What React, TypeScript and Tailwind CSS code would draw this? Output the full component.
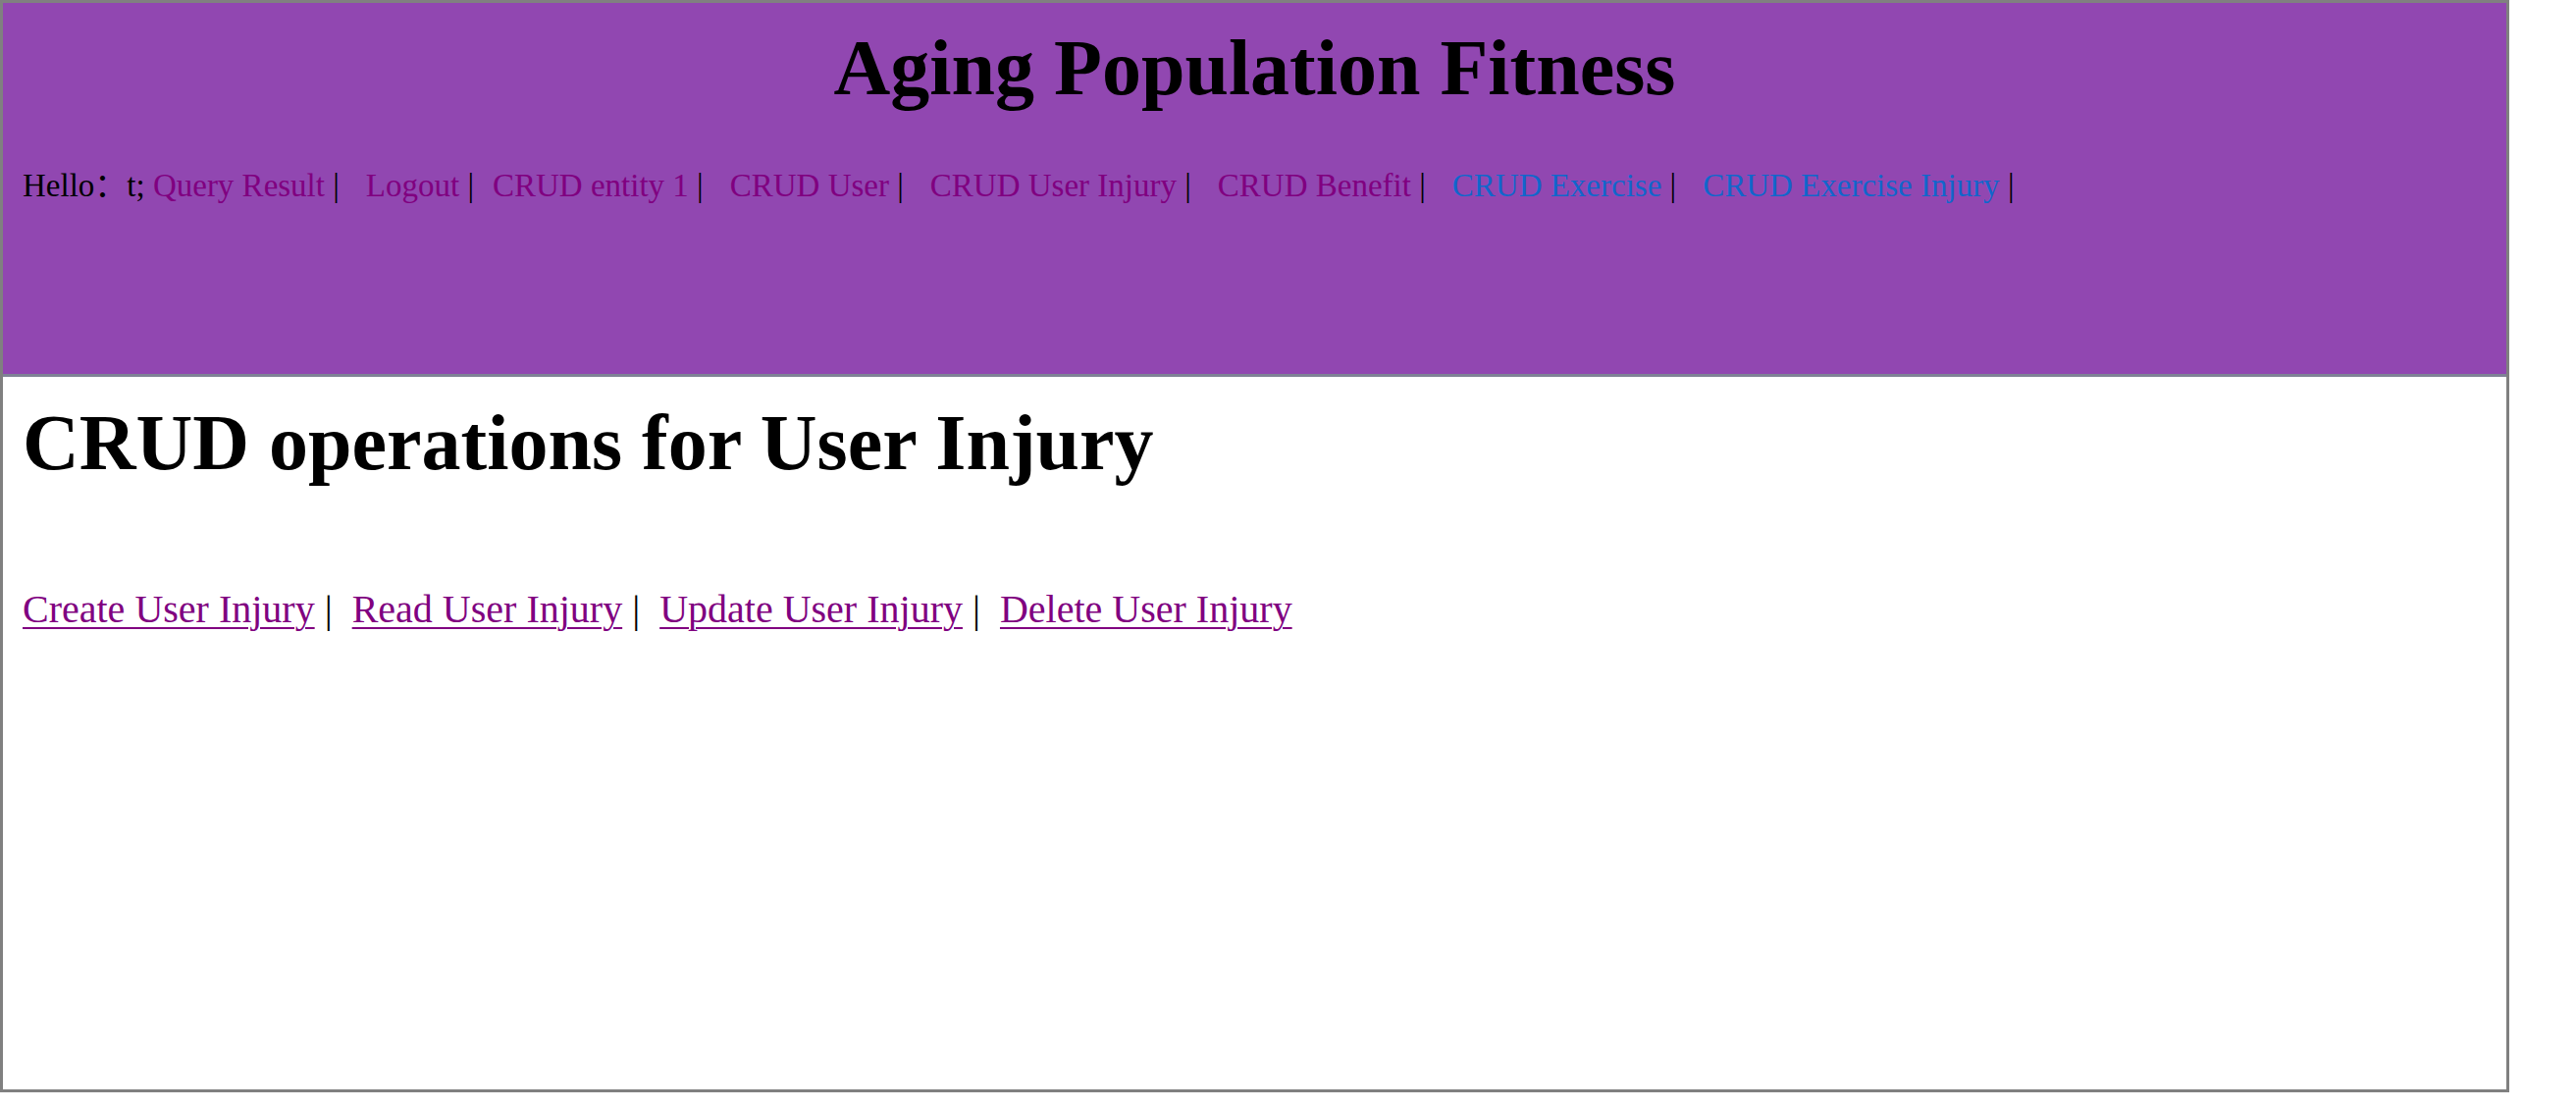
import React from 'react';

const serif = { fontFamily: '"Liberation Serif", "Noto Sans CJK SC", serif' };

function NavLink({ children, blue }: { children: React.ReactNode; blue?: boolean }) {
    return (
        <a href="#" className={blue ? 'text-[#1166cc] no-underline' : 'text-[#800080] no-underline'}>
            {children}
        </a>
    );
}

// " |" followed by a gap before the next link
function Sep({ wide }: { wide?: boolean }) {
    return (
        <>
            {' |'}
            <span className={wide ? 'inline-block w-[27px]' : 'inline-block w-[19px]'} />
        </>
    );
}

function CrudLink({ children }: { children: React.ReactNode }) {
    return (
        <a href="#" className="text-[#800080] underline decoration-[2px] underline-offset-[5px]">
            {children}
        </a>
    );
}

export default function App() {
    return (
        <div className="bg-white min-h-[1130px]" style={serif}>
            <div className="w-[2557px] h-[1113px] border-[3px] border-[#808080] flex flex-col">
                <header className="h-[381px] bg-[#9147b1] border-b-[3px] border-[#7f8296] shrink-0">
                    <h1 className="pt-[26px] text-[80px] leading-none font-bold text-black text-center">
                        Aging Population Fitness
                    </h1>
                    <div className="mt-[64px] pl-[20px] text-[33px] leading-none text-black whitespace-pre">
                        Hello：t; <NavLink>Query Result</NavLink><Sep wide />
                        <NavLink>Logout</NavLink><Sep />
                        <NavLink>CRUD entity 1</NavLink><Sep wide />
                        <NavLink>CRUD User</NavLink><Sep wide />
                        <NavLink>CRUD User Injury</NavLink><Sep wide />
                        <NavLink>CRUD Benefit</NavLink><Sep wide />
                        <NavLink blue>CRUD Exercise</NavLink><Sep wide />
                        <NavLink blue>CRUD Exercise Injury</NavLink> |
                    </div>
                </header>

                <main className="flex-1 pl-[20px]">
                    <h2 className="mt-[27px] text-[80px] leading-none font-bold text-black">
                        CRUD operations for User Injury
                    </h2>
                    <div className="mt-[110px] text-[40px] leading-none text-black whitespace-pre">
                        <CrudLink>Create User Injury</CrudLink> |{'\u00a0 '}
                        <CrudLink>Read User Injury</CrudLink> |{'\u00a0 '}
                        <CrudLink>Update User Injury</CrudLink> |{'\u00a0 '}
                        <CrudLink>Delete User Injury</CrudLink>
                    </div>
                </main>
            </div>
        </div>
    );
}
